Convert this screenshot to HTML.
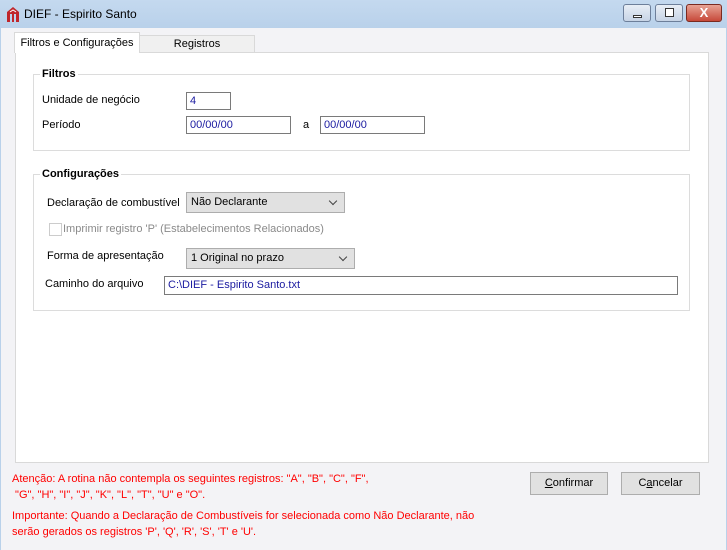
<!DOCTYPE html>
<html><head><meta charset="utf-8"><style>
*{margin:0;padding:0;box-sizing:border-box}
body{width:727px;height:550px;overflow:hidden;font-family:"Liberation Sans",sans-serif;font-size:11px;color:#000;background:#f0f0f0;position:relative}
.a{position:absolute}
.title{left:0;top:0;width:727px;height:28px;background:linear-gradient(#c4d9ef,#b9d1ea)}
.client{left:0;top:28px;width:727px;height:522px;background:#f3f3f6;border-left:1px solid #b9d1ea;border-right:1px solid #b9d1ea}
.wb{top:4px;height:18px;border:1px solid #6d7f9a;border-radius:3px;background:linear-gradient(#e8eef6,#c7d4e6)}
.panel{left:15px;top:52px;width:694px;height:411px;background:#fff;border:1px solid #d9d9d9}
.tab{height:19px;border:1px solid #d9d9d9;border-bottom:none;text-align:center;line-height:17px}
.grp{border:1px solid #dcdcdc}
.gt{font-weight:bold;background:#fff;padding:0 2px}
.inp{height:18px;border:1px solid #7a7a7a;background:#fff;color:#1a1aa0;padding-left:3px;line-height:16px}
.cb{height:21px;border:1px solid #adadad;background:#e1e1e1;padding-left:4px;line-height:19px}
.cb:after{content:"";position:absolute;right:8px;top:5px;width:5px;height:5px;border-right:1px solid #444;border-bottom:1px solid #444;transform:rotate(45deg)}
.btn{height:23px;border:1px solid #adadad;background:#e1e1e1;text-align:center;line-height:21px}
.red{color:#f00;line-height:16px}
</style></head><body>
<div class="a title"></div>
<svg class="a" style="left:6px;top:6px" width="14" height="16" viewBox="0 0 14 16"><path d="M1 16V6L7 1l6 5v10h-3V8H8v8H6V8H4v8z" fill="#c0262b"/><path d="M4 6l3-2 3 2" stroke="#fff" fill="none"/></svg>
<div class="a" style="left:24px;top:7px;font-size:12px">DIEF - Espirito Santo</div>
<div class="a wb" style="left:623px;width:28px"><div class="a" style="left:9px;top:10px;width:9px;height:3px;background:#fff;border:1px solid #333"></div></div>
<div class="a wb" style="left:655px;width:28px"><div class="a" style="left:9px;top:3px;width:9px;height:9px;background:#fff;border:1px solid #333"></div></div>
<div class="a wb" style="left:686px;width:36px;background:linear-gradient(#e8a394,#c7493a);border-color:#7a2a20;color:#fff;font-weight:bold;text-align:center;line-height:16px;font-size:13px">X</div>
<div class="a client"></div>
<div class="a panel"></div>
<div class="a tab" style="left:139px;width:116px;background:#f0f0f0;top:35px;height:17px;line-height:17px">Registros</div>
<div class="a tab" style="left:14px;top:32px;width:126px;height:21px;background:#fff;line-height:20px">Filtros e Configurações</div>
<div class="a grp" style="left:33px;top:74px;width:657px;height:77px"></div>
<div class="a gt" style="left:40px;top:68px">Filtros</div>
<div class="a" style="left:42px;top:94px">Unidade de negócio</div>
<div class="a inp" style="left:186px;top:92px;width:45px">4</div>
<div class="a" style="left:42px;top:119px">Período</div>
<div class="a inp" style="left:186px;top:116px;width:105px">00/00/00</div>
<div class="a" style="left:303px;top:119px">a</div>
<div class="a inp" style="left:320px;top:116px;width:105px">00/00/00</div>
<div class="a grp" style="left:33px;top:174px;width:657px;height:137px"></div>
<div class="a gt" style="left:40px;top:168px">Configurações</div>
<div class="a" style="left:47px;top:197px">Declaração de combustível</div>
<div class="a cb" style="left:186px;top:192px;width:159px">Não Declarante</div>
<div class="a" style="left:49px;top:223px;width:13px;height:13px;border:1px solid #ccc;background:#fff"></div>
<div class="a" style="left:63px;top:223px;color:#8a8a8a">Imprimir registro 'P' (Estabelecimentos Relacionados)</div>
<div class="a" style="left:47px;top:250px">Forma de apresentação</div>
<div class="a cb" style="left:186px;top:248px;width:169px">1 Original no prazo</div>
<div class="a" style="left:45px;top:278px">Caminho do arquivo</div>
<div class="a inp" style="left:164px;top:276px;width:514px;height:19px">C:\DIEF - Espirito Santo.txt</div>
<div class="a red" style="left:12px;top:471px">Atenção: A rotina não contempla os seguintes registros: "A", "B", "C", "F",<br>&nbsp;"G", "H", "I", "J", "K", "L", "T", "U" e "O".</div>
<div class="a red" style="left:12px;top:508px">Importante: Quando a Declaração de Combustíveis for selecionada como Não Declarante, não<br>serão gerados os registros 'P', 'Q', 'R', 'S', 'T' e 'U'.</div>
<div class="a btn" style="left:530px;top:472px;width:78px"><u>C</u>onfirmar</div>
<div class="a btn" style="left:621px;top:472px;width:79px">C<u>a</u>ncelar</div>
</body></html>
